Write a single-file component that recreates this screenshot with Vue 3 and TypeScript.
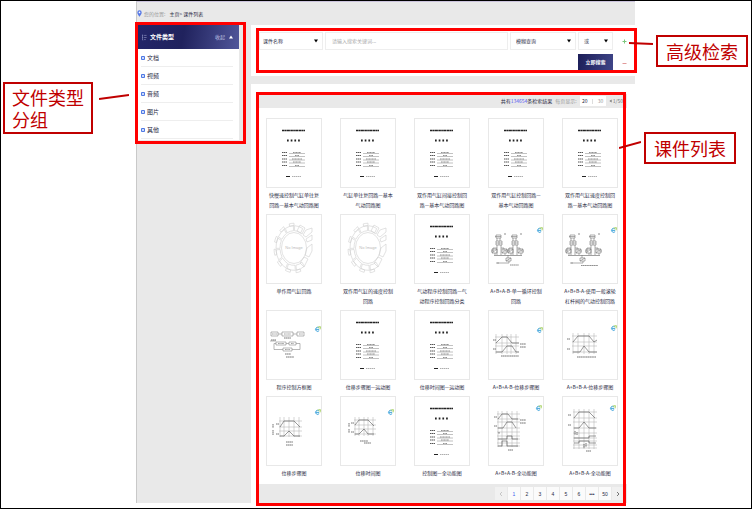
<script setup lang="ts">
import { ref } from 'vue'

type Kind = 'doc' | 'empty' | 'circuit' | 'flow' | 'chart'

interface Plot {
  xs: number[]
  ys: number[]
  top: number
  bottom: number
  lines: string[]
  marks: string
}

interface Course {
  title: string
  kind: Kind
  plot?: Plot
  shift?: number
  logo?: [number, number]
}

const types = ['文档', '视频', '音频', '图片', '其他']
const pages = ['1', '2', '3', '4', '5', '6', '•••', '50']

const field = ref('课件名称')
const keyword = ref('')
const matchMode = ref('模糊查询')
const joiner = ref('或')
const current = ref('1')

const stepAB: Plot = {
  xs: [8, 14, 19, 23, 28], ys: [27, 33, 36, 42], top: 24, bottom: 44,
  lines: ['8,33 14,27 19,27 24,33 31,33', '8,42 14,42 19,36 24,36 28,42 31,42'],
  marks: 'M5 30h3M5 39h3M32 34h6M32 37h6M13 46h18',
}
const stepBA: Plot = {
  xs: [11, 16, 22, 27, 32], ys: [26, 32, 36, 42], top: 23, bottom: 44,
  lines: ['11,32 16,26 27,26 32,32 35,30', '11,42 18,42 22,36 27,42 35,42'],
  marks: 'M5 29h3M5 39h3M15 47h19',
}
const moveStep: Plot = {
  xs: [14, 18, 23, 28, 33], ys: [25, 31, 35, 40], top: 21, bottom: 41,
  lines: ['14,31 18,25 28,25 34,31', '14,40 18,40 23,35 28,40 34,40'],
  marks: 'M10 28h3M10 38h3M7 28v4M7 34v5M20 46h7M20 49h7',
}
const moveTime: Plot = {
  xs: [15, 19, 24, 28, 33], ys: [24, 29, 33, 38], top: 21, bottom: 40,
  lines: ['15,29 19,24 28,24 34,30', '15,38 19,38 24,33 28,38 34,38'],
  marks: 'M11 27h3M11 36h3M9 27v4M9 33v4M20 45h8M24 47h7',
}
const fullAB: Plot = {
  xs: [10, 14, 19, 24, 29], ys: [18, 23, 26, 32, 36, 40, 43, 47, 50], top: 15, bottom: 51,
  lines: ['10,23 14,18 20,18 24,23 30,23', '10,32 15,32 19,26 24,26 28,32', '10,43 19,43 19,40 24,40 24,43 30,43', '10,50 14,50 14,45 19,45 19,50 30,50'],
  marks: 'M6 21h3M6 30h3M32 24h6M32 27h6M11 36v2M20 54h5',
}
const fullBA: Plot = {
  xs: [12, 17, 22, 27, 32], ys: [16, 22, 26, 32, 37, 42, 45, 49, 52], top: 13, bottom: 53,
  lines: ['12,22 17,16 27,16 33,22', '12,32 17,32 22,26 27,32 34,32', '12,42 27,42 27,40 34,40', '12,47 17,47 17,45 27,45 27,47 34,47'],
  marks: 'M6 19h3M6 29h3M13 35v4M15 36v3M22 48v4M24 47v4M24 55h5',
}

const courses: Course[] = [
  { title: '快慢速控制气缸单往复\n回路—基本气动回路图', kind: 'doc' },
  { title: '气缸单往复回路—基本\n气动回路图', kind: 'doc' },
  { title: '双作用气缸间接控制回\n路—基本气动回路图', kind: 'doc' },
  { title: '双作用气缸控制回路—\n基本气动回路图', kind: 'doc' },
  { title: '双作用气缸速度控制回\n路—基本气动回路图', kind: 'doc' },
  { title: '单作用气缸回路', kind: 'empty' },
  { title: '双作用气缸的速度控制\n回路', kind: 'empty' },
  { title: '气动程序控制回路—气\n动程序控制回路分类', kind: 'doc' },
  { title: 'A+B+A-B-单一循环控制\n回路', kind: 'circuit', shift: 0, logo: [52, 16] },
  { title: 'A+B+B-A-使用一般滚轮\n杠杆阀的气动控制回路', kind: 'circuit', shift: 4, logo: [52, 16] },
  { title: '程序控制方框图', kind: 'flow', logo: [52, 19] },
  { title: '位移步骤图—运动图', kind: 'doc' },
  { title: '位移时间图—运动图', kind: 'doc' },
  { title: 'A+B+A-B-位移步骤图', kind: 'chart', plot: stepAB, logo: [52, 20] },
  { title: 'A+B+B-A-位移步骤图', kind: 'chart', plot: stepBA, logo: [52, 18] },
  { title: '位移步骤图', kind: 'chart', plot: moveStep, logo: [52, 16] },
  { title: '位移时间图', kind: 'chart', plot: moveTime, logo: [51, 16] },
  { title: '控制图—全功能图', kind: 'doc' },
  { title: 'A+B+A-B-全功能图', kind: 'chart', plot: fullAB, logo: [51, 12] },
  { title: 'A+B+B-A-全功能图', kind: 'chart', plot: fullBA, logo: [51, 12] },
]

/* One closed block of the segmented ring in the "no image" placeholder. */
function block(from: number, to: number, inner: number, outer: number): string {
  const at = (deg: number, r: number) => {
    const a = (deg * Math.PI) / 180
    return `${(28 + Math.cos(a) * r).toFixed(1)} ${(34 + Math.sin(a) * r * 1.24).toFixed(1)}`
  }
  const mid = (from + to) / 2
  return `M${at(from, inner)}L${at(from, outer)}L${at(mid, outer)}L${at(to, outer)}L${at(to, inner)}L${at(mid, inner)}Z`
}

const ring: string[] = []
for (let a = 55; a < 275; a += 31) {
  ring.push(block(a, a + 27, 14, 18))
}
for (let a = 70; a < 260; a += 31) {
  ring.push(block(a, a + 14, 18, 20))
}

const gridPath = (p: Plot) => {
  const left = p.xs[0] - 1
  const right = p.xs[p.xs.length - 1] + 3
  return p.xs.map((x) => `M${x} ${p.top}V${p.bottom}`).join('') + p.ys.map((y) => `M${left} ${y}H${right}`).join('')
}
</script>

<template>
  <div class="sheet">
    <div class="app">
      <nav class="crumbs" aria-label="您的位置">
        <svg class="pin" viewBox="0 0 6 8"><path d="M3 0a2.6 2.6 0 0 0-2.6 2.7C.4 4.8 3 7.8 3 7.8s2.6-3 2.6-5.1A2.6 2.6 0 0 0 3 0Z" fill="#5577e6" /><circle cx="3" cy="2.7" r="1" fill="#fff" /></svg>
        <span class="muted">您的位置:</span>
        <span><a href="#">主页</a>&gt; <a href="#">课件列表</a></span>
      </nav>

      <div class="body">
        <aside class="side framed">
          <header class="side-head">
            <svg class="tree" viewBox="0 0 6 7"><path d="M.5 0v6.5h1M2.500 1h3M2.500 3.500h3M2.500 6h2M.5 1h1M.5 3.500h1" stroke="#aeb2dc" stroke-width=".6" fill="none" /></svg>
            <h2>文件类型</h2>
            <button type="button" class="fold">收起 <svg viewBox="0 0 4 4"><path d="M0 3.500 2 .5l2 3Z" fill="#fff" /></svg></button>
          </header>
          <ul class="types">
            <li v-for="t in types" :key="t">
              <a href="#"><svg viewBox="0 0 4 4"><path d="M.5.500h3v3h-3Z" fill="#e9efff" stroke="#4f78e4" /><path d="M1 2h2M2 1v2" stroke="#a7bcf5" stroke-width=".5" /></svg>{{ t }}</a>
            </li>
          </ul>
        </aside>

        <main class="main">
          <form class="search framed" @submit.prevent>
            <div class="pick field">
              <select v-model="field" aria-label="检索字段"><option>课件名称</option></select>
              <svg viewBox="0 0 4 4"><path d="M0 .5h4l-2 3Z" /></svg>
            </div>
            <input v-model="keyword" class="keyword" type="text" aria-label="关键词" placeholder="请输入搜索关键词..." />
            <div class="pick">
              <select v-model="matchMode" aria-label="匹配方式"><option>模糊查询</option></select>
              <svg viewBox="0 0 4 4"><path d="M0 .5h4l-2 3Z" /></svg>
            </div>
            <div class="pick">
              <select v-model="joiner" aria-label="逻辑关系"><option>或</option></select>
              <svg viewBox="0 0 4 4"><path d="M0 .5h4l-2 3Z" /></svg>
            </div>
            <button type="button" class="sign" aria-label="添加条件"><svg viewBox="0 0 5 5"><path d="M.5 2.500h4M2.500.500v4" stroke="#7cc67c" /></svg></button>
            <button type="submit" class="go">立即搜索</button>
            <button type="button" class="sign" aria-label="删除条件"><svg viewBox="0 0 5 5"><path d="M.5 3.500h4" stroke="#e29a9a" /></svg></button>
          </form>

          <section class="list framed">
            <div class="bar">
              <span>共有<b>134654</b>条检索结果</span>
              <span class="muted">每页显示:</span>
              <span class="sizes"><button type="button">20</button><i></i><button type="button" class="muted">30</button></span>
              <span class="count"><svg viewBox="0 0 4 4"><path d="M3.500 0v4L.5 2Z" fill="#777" /></svg>1/50</span>
            </div>

            <div class="grid">
              <a v-for="(c, i) in courses" :key="i" href="#" class="course">
                <svg class="thumb" viewBox="1 1 54 68">
                  <g v-if="c.kind === 'doc'" fill="none" stroke="#222">
                    <path d="M16 12.500h23" stroke-width="1.500" stroke-dasharray="2.600 .3 1.700 .3 3 .4" />
                    <path d="M21 22.500h13" stroke-width="2" stroke-dasharray="1.700 2" />
                    <path d="M16 34.500h5M16 37.500h5M16 41h5M16 44h5M16 47.500h5" stroke="#555" stroke-dasharray="1.500 .4" />
                    <path d="M23 35.500h16M23 38.500h16M23 42h16M23 45h16M23 48.500h16" stroke="#999" stroke-width=".6" />
                    <path d="M27 34.500h8M29 37.500h4M26 41h10M27 44h8M29 47.500h4" stroke="#777" stroke-width=".8" stroke-dasharray="1.200 .3" />
                    <path d="M20 58.500h4" /><path d="M26 58.500h9" stroke="#999" stroke-width=".8" stroke-dasharray="1.500 .5" />
                  </g>
                  <g v-else-if="c.kind === 'empty'" fill="none" stroke="#cfcfcf" stroke-width=".6">
                    <path v-for="(d, n) in ring" :key="n" :d="d" />
                    <ellipse cx="28" cy="34" rx="12.500" ry="15.500" />
                    <path d="M31 17l3-6 5 3-3 6ZM37 21l3-5 6-2v4l-6 5ZM40 25l6-4v5l-5 2ZM41 34l5-4v7l-3 6-4-2ZM38 43l4 2-4 8-4-4Z" />
                    <text x="28" y="35" text-anchor="middle" class="noimg">No Image</text>
                  </g>
                  <g v-else-if="c.kind === 'circuit'" fill="none" stroke="#777" stroke-width=".6">
                    <g v-for="n in 2" :key="n" :transform="`translate(${(n - 1) * (16 + (c.shift ?? 0))} 0)`">
                      <path d="M8 21h5v3H8ZM7 22.500h6M9 24v3M12 24v3M8 27h6v4H8ZM8 29h6M11 27v4M9 31v3H5v3M13 31v3h3v3M9 34v7M13 34v7" />
                      <path d="M4 35h5v4H4ZM14 35h5v4h-5ZM4 39l5-4M14 39l5-4M3 37h3M17 37h3M7 39v2M17 39v2" />
                      <path d="M17 19v2" stroke="#444" />
                    </g>
                    <path :d="`M6 41.500H${34 + (c.shift ?? 0)}`" stroke-width=".7" />
                    <path d="M18 44h5v3h-5ZM20 41v3M18 47l5-3M21 47v2h-8M8 49h5M10 48v2" />
                    <path :d="c.shift ? 'M19 51.500h17' : 'M22 51h9'" stroke="#444" stroke-dasharray="1.500 .3" />
                  </g>
                  <g v-else-if="c.kind === 'flow'" fill="none" stroke="#888" stroke-width=".6">
                    <path d="M5 22h7v4H5ZM16 22h11v4H16ZM31 22h7v4h-7ZM12 24h4M27 24h4M10 32h10v3H10ZM23 32h7v3h-7ZM20 33.500h3M30 33.500h4v6h-8M17 39.500H8v-6h2M17 38h9v3h-9ZM4 31h6" />
                    <path d="M6 24h5M18 24h7M33 24h4M12 33.500h6M25 33.500h3M19 39.500h5" stroke="#666" stroke-dasharray="1 .3" />
                    <path d="M18 28h7M19 44h6M20 47h8M5 30h5" stroke="#555" stroke-width=".8" stroke-dasharray="1.500 .3" />
                  </g>
                  <g v-else-if="c.plot" fill="none">
                    <path :d="gridPath(c.plot)" stroke="#aaa" stroke-width=".5" />
                    <polyline v-for="l in c.plot.lines" :key="l" :points="l" stroke="#555" stroke-width=".6" />
                    <path :d="c.plot.marks" stroke="#666" stroke-width=".9" stroke-dasharray="1.500 .3" />
                  </g>
                  <g v-if="c.logo" :transform="`translate(${c.logo[0]} ${c.logo[1]})`" fill="none">
                    <path d="M1.200 1.500A2 2 0 1 1 .8-1.200M-2 .4h3" stroke="#2d9bd8" stroke-width=".9" />
                    <path d="M-.3-1.900 2.400-2.300 2 .4" stroke="#9acb4c" stroke-width=".9" />
                  </g>
                </svg>
                <span class="title">{{ c.title }}</span>
              </a>
            </div>

            <nav class="pager" aria-label="分页">
              <button type="button" class="prev" aria-label="上一页"><svg viewBox="0 0 4 6"><path d="M3 1 1 3l2 2" fill="none" stroke="#bbb" stroke-width=".8" /></svg></button>
              <button v-for="p in pages" :key="p" type="button" :class="{ on: p === current }" @click="current = p">{{ p }}</button>
              <button type="button" class="next" aria-label="下一页"><svg viewBox="0 0 4 6"><path d="m1 1 2 2-2 2" fill="none" stroke="#555" stroke-width=".8" /></svg></button>
            </nav>
          </section>
        </main>
      </div>
    </div>

    <p class="note note-types">文件类型分组</p>
    <p class="note note-search">高级检索</p>
    <p class="note note-list">课件列表</p>
    <svg class="lead lead-types" viewBox="0 0 30 6"><path d="M0 5 30 1" /></svg>
    <svg class="lead lead-search" viewBox="0 0 24 4"><path d="m0 1 24 1" /></svg>
    <svg class="lead lead-list" viewBox="0 0 22 8"><path d="m0 7 22-6" /></svg>
  </div>
</template>

<style>
body {
  margin: 0;
  background: #fff;
}
</style>

<style scoped>
* {
  box-sizing: border-box;
}

.sheet {
  position: relative;
  min-height: 100vh;
  padding: 0 116px 5px 135px;
  border: 1px solid #000;
  font-family: "Noto Sans CJK SC", sans-serif;
  font-size: 5px;
  line-height: 10px;
  color: #2a2b44;
}

h2, p, ul {
  margin: 0;
  padding: 0;
}

li {
  list-style: none;
}

a {
  color: inherit;
  text-decoration: none;
}

button, select, input {
  margin: 0;
  padding: 0;
  border: 0;
  border-radius: 0;
  background: none;
  font: inherit;
  color: inherit;
}

svg {
  display: block;
}

.app {
  background: #e9e9e9;
  border-top: 1px solid #cbc3dd;
  border-left: 1px solid #c9c9c9;
}

.crumbs {
  display: flex;
  align-items: center;
  gap: 4px;
  height: 23px;
}

.pin {
  width: 5px;
  height: 7px;
  margin-right: -2px;
}

.muted {
  color: #999;
}

.body {
  display: grid;
  grid-template-columns: 102px minmax(0, 1fr);
  gap: 12px;
  align-items: start;
}

.framed {
  position: relative;
}

.framed::after {
  content: "";
  position: absolute;
  border: 3px solid #f00;
  pointer-events: none;
}

.side {
  background: #fff;
}

.side::after {
  inset: -3px -7px -4px -2px;
}

.side-head {
  display: flex;
  align-items: center;
  height: 24px;
  padding: 0 6px 0 5px;
  background: linear-gradient(100deg, #23266a, #20225d 45%, #50569a);
  color: #fff;
}

.tree {
  width: 5px;
  height: 7px;
  margin-right: 3px;
}

.side-head h2 {
  font-size: 6px;
  font-weight: 700;
}

.fold {
  display: flex;
  align-items: center;
  gap: 4px;
  margin-left: auto;
  color: #c3c6e4;
}

.fold svg {
  width: 4px;
  height: 4px;
}

.types {
  padding: 0 6px 1px 4px;
}

.types li {
  border-bottom: 1px solid #eee;
}

.types a {
  display: flex;
  align-items: center;
  gap: 2px;
  height: 17px;
  font-size: 6px;
}

.types svg {
  width: 4px;
  height: 4px;
}

.main {
  display: grid;
  gap: 8px;
}

.search {
  display: grid;
  grid-template-columns: 64px minmax(0, 1fr) 66px 35px 18px;
  grid-template-rows: 18px 16px;
  gap: 4px 2px;
  padding: 7px 2px 6px 8px;
  background: #fff;
}

.search::after {
  inset: 3px -2px 3px 5px;
}

.pick {
  position: relative;
  display: flex;
  border: 1px solid #eee;
}

.pick select {
  width: 100%;
  padding-left: 5px;
  appearance: none;
}

.field select {
  padding-left: 3px;
}

.pick svg {
  position: absolute;
  right: 4px;
  top: 6px;
  width: 4px;
  height: 4px;
}

.keyword {
  width: 100%;
  padding: 0 6px;
  border: 1px solid #eee;
}

.keyword::placeholder {
  color: #aaa;
}

.sign {
  display: grid;
  place-items: center;
}

.sign svg {
  width: 5px;
  height: 5px;
}

.go {
  grid-column: 4;
  background: linear-gradient(100deg, #1c1e58, #3f4588);
  color: #fff;
  font-weight: 700;
}

.list {
  padding: 10px 8px 0 6px;
  background: #fff;
}

.list::after {
  inset: 8px 9px -3px 5px;
}

.bar {
  display: flex;
  justify-content: flex-end;
  align-items: center;
  gap: 3px;
  height: 14px;
  padding-right: 4px;
  background: #e9e9e9;
}

.bar b {
  font-weight: 400;
  color: #5a5af0;
}

.sizes {
  display: flex;
  align-items: center;
  justify-content: space-around;
  width: 26px;
  height: 10px;
  background: #fff;
}

.sizes i {
  width: 1px;
  height: 5px;
  background: #ddd;
}

.count {
  display: flex;
  align-items: center;
  gap: 1px;
  color: #777;
}

.count svg {
  width: 3px;
  height: 4px;
}

.grid {
  display: grid;
  grid-template-columns: repeat(5, 1fr);
  row-gap: 4px;
  padding: 10px 0 6px;
}

.course {
  display: flex;
  flex-direction: column;
  align-items: center;
  gap: 2px;
}

.thumb {
  width: 56px;
  height: 70px;
  border: 1px solid #e8e8e8;
  background: #fff;
}

.noimg {
  font-family: "Liberation Sans", sans-serif;
  font-size: 4px;
  fill: #bbb;
  stroke: none;
}

.title {
  text-align: center;
  white-space: pre;
}

.pager {
  display: flex;
  justify-content: flex-end;
  align-items: center;
  gap: 1px;
  height: 19px;
  padding-right: 3px;
  background: #e9e9e9;
}

.pager button {
  display: grid;
  place-items: center;
  width: 12px;
  height: 13px;
  background: #fbfbfb;
  font-family: "Liberation Sans", sans-serif;
}

.pager .prev,
.pager .next {
  background: #f1f1f1;
}

.pager .on {
  color: #3b5bf0;
}

.pager svg {
  width: 4px;
  height: 6px;
}

.note {
  position: absolute;
  padding: 3px 8px;
  border: 2px solid #c00000;
  background: #fff;
  color: #c00000;
  font-size: 18px;
  line-height: 22px;
}

.note-types {
  left: 2px;
  top: 81px;
  width: 90px;
  padding: 2px 7px;
}

.note-search {
  right: 3px;
  top: 34px;
}

.note-list {
  right: 15px;
  top: 131px;
}

.lead {
  position: absolute;
  fill: none;
  stroke: #c00000;
  stroke-width: 2;
}

.lead-types {
  left: 98px;
  top: 93px;
  width: 30px;
}

.lead-search {
  right: 98px;
  top: 41px;
  width: 24px;
}

.lead-list {
  right: 110px;
  top: 140px;
  width: 22px;
}
</style>
